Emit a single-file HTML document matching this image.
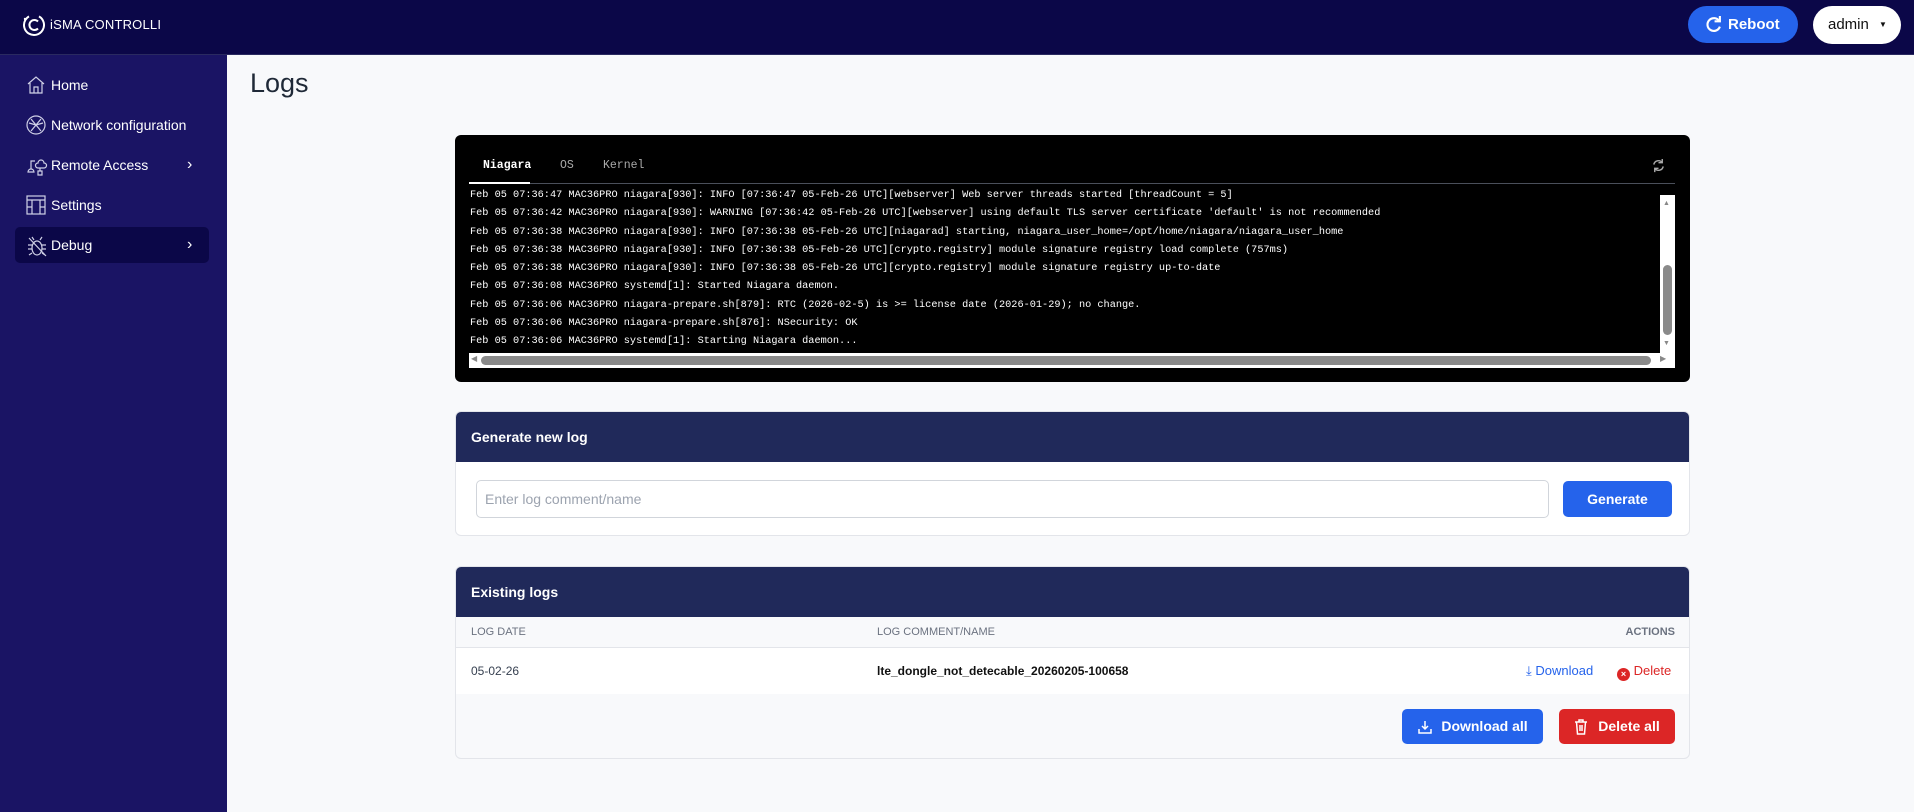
<!DOCTYPE html>
<html><head><meta charset="utf-8"><style>
*{box-sizing:border-box;margin:0;padding:0}
body{width:1914px;height:812px;overflow:hidden;background:#f8f9fb;font-family:"Liberation Sans",sans-serif;position:relative}
.top{position:absolute;left:0;top:0;width:1914px;height:55px;background:#0b0748;border-bottom:1px solid #2a2a60}
.side{position:absolute;left:0;top:55px;width:227px;height:757px;background:#1a1464}
.nav{position:absolute;left:15px;width:194px;height:36px;color:#fff;font-size:14px;line-height:36px;padding-left:36px;border-radius:5px}
.nav svg{position:absolute;left:11px;top:8px}
.nav .chev{position:absolute;left:172px;top:0;font-size:16px}
.abs{position:absolute}
.card{position:absolute;left:455px;width:1235px;background:#fff;border:1px solid #e3e5ea;border-radius:6px;overflow:hidden}
.ch{height:50px;background:#20295a;color:#fff;font-weight:bold;font-size:14px;line-height:50px;padding-left:15px}
.term{position:absolute;left:455px;top:135px;width:1235px;height:247px;background:#000;border-radius:6px}
.lines{position:absolute;left:15px;top:51px;font-family:"Liberation Mono",monospace;font-size:10.25px;color:#fff;white-space:pre;line-height:18.3px;width:1190px;height:167px;overflow:hidden}
.btn{position:absolute;color:#fff;font-weight:bold;font-size:14px;text-align:center;border-radius:5px;white-space:nowrap}
</style></head><body>
<div class="top">
<svg class="abs" style="left:22px;top:13px" width="23" height="24" viewBox="0 0 23 24"><circle cx="12" cy="12" r="10" fill="none" stroke="#fff" stroke-width="2" stroke-dasharray="52 11" transform="rotate(-60 12 12)"/><path d="M16 8.5a5 5 0 1 0 0 7" fill="none" stroke="#fff" stroke-width="2"/><circle cx="3" cy="6" r="1.2" fill="#fff"/></svg>
<div class="abs" style="left:50px;top:17px;color:#fff;font-size:13px;letter-spacing:.2px">iSMA CONTROLLI</div>
<div class="abs" style="left:1688px;top:6px;width:110px;height:37px;border-radius:19px;background:#2563eb;color:#fff;font-weight:bold;font-size:15px;line-height:37px;padding-left:40px;white-space:nowrap">Reboot
<svg class="abs" style="left:17px;top:10px" width="17" height="17" viewBox="0 0 16 16"><path d="M13.5 5A6 6 0 1 0 14 10" fill="none" stroke="#fff" stroke-width="2"/><path d="M9 5h5V0" fill="none" stroke="#fff" stroke-width="2"/></svg></div>
<div class="abs" style="left:1813px;top:6px;width:88px;height:38px;border-radius:19px;background:#fff;color:#111;font-size:15px;line-height:38px;padding-left:15px;white-space:nowrap">admin <span style="font-size:8px;margin-left:6px;vertical-align:2px">▼</span></div>
</div>
<div class="side">
<div class="nav" style="top:12px"><svg width="20" height="20" viewBox="0 0 20 20" fill="none" stroke="#cfd0e6" stroke-width="1.2"><path d="M2 9L10 2l8 7M4 8v10h12V8M8 18v-6h4v6"/></svg>Home</div>
<div class="nav" style="top:52px"><svg width="20" height="20" viewBox="0 0 20 20" fill="none" stroke="#cfd0e6" stroke-width="1.2"><circle cx="10" cy="10" r="9"/><path d="M5 4l10 12M15 4L5 16M3 8l7 2 7-2"/></svg>Network configuration</div>
<div class="nav" style="top:92px"><svg width="22" height="22" viewBox="0 0 22 22" fill="none" stroke="#cfd0e6" stroke-width="1.2"><path d="M12 8a3 3 0 0 1 6 0 2.5 2.5 0 0 1 0 5h-6a2.5 2.5 0 0 1 0-5zM2 17a3 3 0 0 1 6 0h-6zM5 14V6h4M14 13v3M12 16h4v4h-4z"/></svg>Remote Access<span class="chev">›</span></div>
<div class="nav" style="top:132px"><svg width="20" height="20" viewBox="0 0 20 20" fill="none" stroke="#cfd0e6" stroke-width="1.2"><rect x="1" y="1" width="18" height="18"/><path d="M1 5h18M6 5v14M14 5v14M1 12h5M14 12h5"/></svg>Settings</div>
<div class="nav" style="top:172px;background:#0b0748"><svg width="22" height="22" viewBox="0 0 22 22" fill="none" stroke="#cfd0e6" stroke-width="1.2"><ellipse cx="11" cy="13" rx="5" ry="7"/><path d="M8 5l-2-3M14 5l2-3M6 10H2M6 14H2M6 18l-3 2M16 10h4M16 14h4M16 18l3 2M3 3l17 18"/></svg>Debug<span class="chev">›</span></div>
</div>
<div class="abs" style="left:250px;top:68px;font-size:27px;color:#1f2937">Logs</div>

<div class="term">
<div class="abs" style="left:28px;top:24px;font-family:'Liberation Mono',monospace;font-size:11.5px;color:#fff;font-weight:bold">Niagara</div>
<div class="abs" style="left:105px;top:24px;font-family:'Liberation Mono',monospace;font-size:11.5px;color:#aaa">OS</div>
<div class="abs" style="left:148px;top:24px;font-family:'Liberation Mono',monospace;font-size:11.5px;color:#aaa">Kernel</div>
<div class="abs" style="left:14px;top:48px;width:1206px;height:1px;background:#4a4f5a"></div>
<div class="abs" style="left:14px;top:47px;width:61px;height:2px;background:#fff"></div>
<svg class="abs" style="left:1196px;top:23px" width="15" height="15" viewBox="0 0 16 16" fill="none" stroke="#aaa" stroke-width="1.5"><path d="M3 7a5 5 0 0 1 9-2M13 9a5 5 0 0 1-9 2M12 1v4H8M4 15v-4h4"/></svg>
<div class="lines">Feb 05 07:36:47 MAC36PRO niagara[930]: INFO [07:36:47 05-Feb-26 UTC][webserver] Web server threads started [threadCount = 5]
Feb 05 07:36:42 MAC36PRO niagara[930]: WARNING [07:36:42 05-Feb-26 UTC][webserver] using default TLS server certificate 'default' is not recommended
Feb 05 07:36:38 MAC36PRO niagara[930]: INFO [07:36:38 05-Feb-26 UTC][niagarad] starting, niagara_user_home=/opt/home/niagara/niagara_user_home
Feb 05 07:36:38 MAC36PRO niagara[930]: INFO [07:36:38 05-Feb-26 UTC][crypto.registry] module signature registry load complete (757ms)
Feb 05 07:36:38 MAC36PRO niagara[930]: INFO [07:36:38 05-Feb-26 UTC][crypto.registry] module signature registry up-to-date
Feb 05 07:36:08 MAC36PRO systemd[1]: Started Niagara daemon.
Feb 05 07:36:06 MAC36PRO niagara-prepare.sh[879]: RTC (2026-02-5) is >= license date (2026-01-29); no change.
Feb 05 07:36:06 MAC36PRO niagara-prepare.sh[876]: NSecurity: OK
Feb 05 07:36:06 MAC36PRO systemd[1]: Starting Niagara daemon...</div>
<div class="abs" style="left:1205px;top:60px;width:15px;height:158px;background:#fff"><div class="abs" style="left:3px;top:70px;width:9px;height:70px;background:#8a8a8a;border-radius:5px"></div><div class="abs" style="left:3px;top:5px;font-size:7px;color:#888">▲</div><div class="abs" style="left:3px;top:145px;font-size:7px;color:#888">▼</div></div>
<div class="abs" style="left:14px;top:218px;width:1206px;height:15px;background:#fff"><div class="abs" style="left:12px;top:3px;width:1170px;height:9px;background:#8a8a8a;border-radius:5px"></div><div class="abs" style="left:1191px;top:1px;font-size:8px;color:#888">▶</div><div class="abs" style="left:2px;top:1px;font-size:8px;color:#888">◀</div></div>
</div>

<div class="card" style="top:411px;height:125px">
<div class="ch">Generate new log</div>
<div class="abs" style="left:20px;top:68px;width:1073px;height:38px;border:1px solid #d1d5db;border-radius:5px;font-size:14px;color:#9ca3af;line-height:36px;padding-left:8px">Enter log comment/name</div>
<div class="btn" style="left:1107px;top:69px;width:109px;height:36px;line-height:36px;background:#2563eb">Generate</div>
</div>

<div class="card" style="top:566px;height:193px;background:#f8f9fb">
<div class="ch">Existing logs</div>
<div class="abs" style="left:0;top:50px;width:1235px;height:31px;border-bottom:1px solid #e3e5ea;font-size:11px;color:#6b7280;line-height:31px"><span class="abs" style="left:15px">LOG DATE</span><span class="abs" style="left:421px">LOG COMMENT/NAME</span><span class="abs" style="right:16px;font-weight:bold">ACTIONS</span></div>
<div class="abs" style="left:0;top:81px;width:1235px;height:46px;background:#fff;font-size:12px;line-height:46px;color:#374151"><span class="abs" style="left:15px">05-02-26</span><span class="abs" style="left:421px;color:#111;font-weight:bold">lte_dongle_not_detecable_20260205-100658</span>
<span class="abs" style="left:1070px;color:#2563eb;font-size:13px">⤓ Download</span><span class="abs" style="left:1161px;color:#dc2626;white-space:nowrap;font-size:13px"><span style="display:inline-block;width:13px;height:13px;border-radius:50%;background:#dc2626;color:#fff;font-size:9px;line-height:13px;text-align:center;font-weight:bold;vertical-align:-2px">×</span> Delete</span></div>
<div class="btn" style="left:946px;top:142px;width:141px;height:35px;line-height:35px;background:#2563eb;padding-left:24px">Download all<svg class="abs" style="left:16px;top:11px" width="14" height="14" viewBox="0 0 14 14" fill="none" stroke="#fff" stroke-width="1.5"><path d="M7 1v8M4 6l3 3 3-3M1 9v4h12V9"/></svg></div>
<div class="btn" style="left:1103px;top:142px;width:116px;height:35px;line-height:35px;background:#dc2626;padding-left:24px">Delete all<svg class="abs" style="left:15px;top:10px" width="14" height="16" viewBox="0 0 14 16" fill="none" stroke="#fff" stroke-width="1.5"><path d="M1 3h12M5 3V1h4v2M2.5 3l1 12h7l1-12M6 6v6M8 6v6"/></svg></div>
</div>
</body></html>
